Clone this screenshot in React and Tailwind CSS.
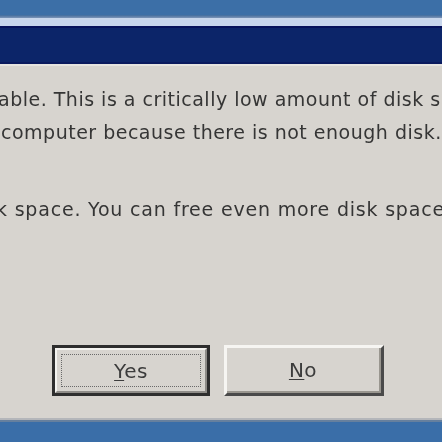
import React from 'react';

// crop of a classic "Low Disk Space" dialog
const lines = [
  { text: 'able. This is a critically low amount of disk sp', mt: 'mt-[22px]', ml: '-ml-[2px]', ts: 'tracking-[0.5px]' },
  { text: 'computer because there is not enough disk.', mt: 'mt-[10px]', ml: 'ml-[1px]', ts: 'tracking-[0.5px]' },
  { text: 'k space. You can free even more disk space', mt: 'mt-[54px]', ml: '-ml-[4px]', ts: 'tracking-[0.8px]' },
];

function ClassicButton({ focused }) {
  if (focused) {
    return (
      <div className="w-[158px] h-[51px] border-[3px] border-[#2e2e2e] bg-[#d7d4cf] flex">
        <div className="flex-1 border-t-2 border-l-2 border-t-[#f4f3f0] border-l-[#f4f3f0] border-b-2 border-r-2 border-b-[#8e8c88] border-r-[#8e8c88] p-[4px] flex">
          <div className="flex-1 border border-dotted border-[#6a6a6a] flex items-center justify-center">
            <span className="text-[20px] tracking-[0.5px] text-[#3c3c3c] blur-[0.5px]">
              <span className="underline decoration-1 underline-offset-2">Y</span>es
            </span>
          </div>
        </div>
      </div>
    );
  }
  return (
    <div className="w-[160px] h-[51px] border-t-[3px] border-l-[3px] border-t-[#f6f5f2] border-l-[#f6f5f2] border-b-[3px] border-r-[3px] border-b-[#4a4a4a] border-r-[#4a4a4a] bg-[#d7d4cf] flex">
      <div className="flex-1 border-b-2 border-r-2 border-b-[#99968f] border-r-[#99968f] flex items-center justify-center">
        <span className="text-[20px] tracking-[0.5px] text-[#3c3c3c] blur-[0.5px]">
          <span className="underline decoration-1 underline-offset-2">N</span>o
        </span>
      </div>
    </div>
  );
}

export default function App() {
  return (
    <div
      className="w-[442px] h-[442px] overflow-hidden flex flex-col bg-[#d7d4cf]"
      style={{ fontFamily: '"DejaVu Sans", Verdana, sans-serif' }}
    >
      <div className="h-[15px] bg-[#3c6fa7]" />
      <div className="h-[3px] bg-gradient-to-b from-[#3f6b9c] to-[#7d95b8]" />
      <div className="h-[8px] bg-[#c8d6ec]" />
      <div className="h-[2px] bg-[#07125a]" />
      <div className="h-[34px] bg-[#0c2569]" />
      <div className="h-[2px] bg-[#0a1a5e]" />
      <div className="h-[2px] bg-[#e6e4e0]" />

      <main className="flex-1 flex flex-col overflow-hidden">
        {lines.map((l, i) => (
          <div key={i} className={`whitespace-nowrap text-[19px] leading-[23px] text-[#353535] blur-[0.5px] ${l.ts} ${l.mt} ${l.ml}`}>
            {l.text}
          </div>
        ))}
        <div className="flex gap-[14px] mt-[124px] ml-[52px]">
          <ClassicButton focused />
          <ClassicButton />
        </div>
      </main>

      <div className="h-[2px] bg-[#b4b6ba]" />
      <div className="h-[2px] bg-[#66809e]" />
      <div className="h-[20px] bg-[#3a6ea8]" />
    </div>
  );
}
